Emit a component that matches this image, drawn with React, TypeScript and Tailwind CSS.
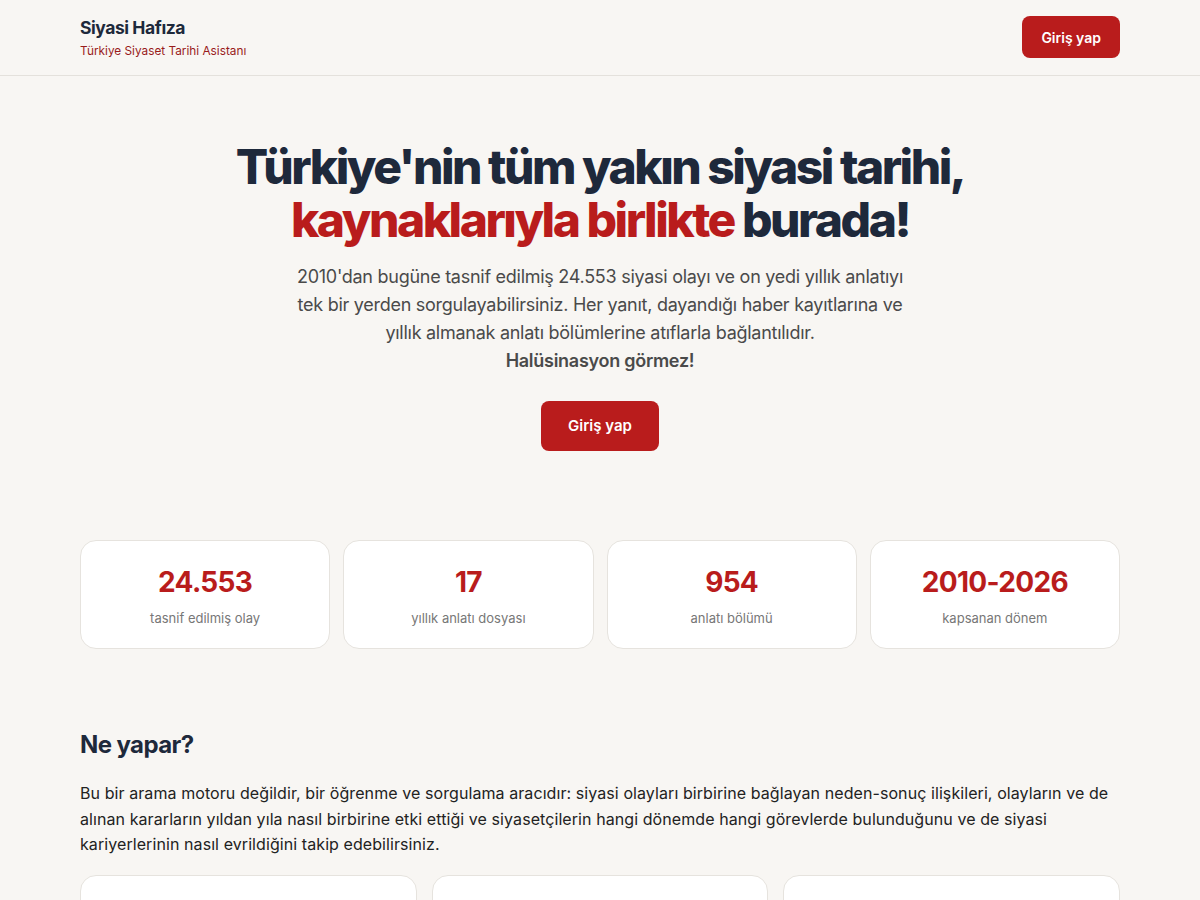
const stats = [
  { value: '24.553', label: 'tasnif edilmiş olay' },
  { value: '17', label: 'yıllık anlatı dosyası' },
  { value: '954', label: 'anlatı bölümü' },
  { value: '2010-2026', label: 'kapsanan dönem' },
];

export default function App() {
  return (
    <div className="min-h-screen bg-[#f8f6f3] text-[#1e293b]" style={{ fontFamily: 'Inter, "Noto Sans", sans-serif' }}>
      <header className="border-b border-[#e4e1dc]">
        <div className="mx-auto flex h-[75px] max-w-[1040px] items-center justify-between">
          <div>
            <p className="text-[17.5px] font-bold leading-6 tracking-tight text-[#1e293b]">Siyasi Hafıza</p>
            <p className="mt-[3px] text-[11.8px] leading-4 text-[#991b1b]">Türkiye Siyaset Tarihi Asistanı</p>
          </div>
          <button className="mb-[1px] h-[42px] rounded-lg bg-[#b91c1c] px-[19px] text-[14px] font-semibold text-white">Giriş yap</button>
        </div>
      </header>

      <main className="mx-auto max-w-[1040px]">
        <section className="flex flex-col items-center pt-[64px] text-center">
          <h1 className="text-[48px] font-extrabold leading-[53px] tracking-[-0.052em] text-[#1e293b]">
            Türkiye'nin tüm yakın siyasi tarihi,
            <br />
            <span className="text-[#b91c1c]">kaynaklarıyla birlikte</span> burada!
          </h1>
          <p className="mt-[17px] max-w-[630px] text-[18px] leading-[28px] tracking-[-0.015em] text-[#4a4a4a]">
            2010'dan bugüne tasnif edilmiş 24.553 siyasi olayı ve on yedi yıllık anlatıyı tek bir yerden sorgulayabilirsiniz. Her yanıt, dayandığı haber kayıtlarına ve yıllık almanak anlatı bölümlerine atıflarla bağlantılıdır.
            <br />
            <strong className="font-semibold">Halüsinasyon görmez!</strong>
          </p>
          <button className="mt-[26px] h-[50px] rounded-lg bg-[#b91c1c] px-[27px] text-[15px] font-semibold text-white">Giriş yap</button>
        </section>

        <section className="mt-[89px] grid grid-cols-4 gap-[13px]">
          {stats.map((s) => (
            <div key={s.label} className="flex h-[109px] flex-col items-center justify-center rounded-2xl border border-[#e6e3de] bg-white">
              <p className="mt-[2px] text-[28px] font-bold leading-9 tracking-tight text-[#b91c1c]">{s.value}</p>
              <p className="mt-[8px] text-[13px] leading-5 text-[#777]">{s.label}</p>
            </div>
          ))}
        </section>

        <section className="mt-[80px]">
          <h2 className="text-[24px] font-bold leading-8 tracking-tight text-[#1e293b]">Ne yapar?</h2>
          <p className="mt-[20px] text-[16px] leading-[25.5px] tracking-[0.005em] text-[#222]">
            Bu bir arama motoru değildir, bir öğrenme ve sorgulama aracıdır: siyasi olayları birbirine bağlayan neden-sonuç ilişkileri, olayların ve de alınan kararların yıldan yıla nasıl birbirine etki ettiği ve siyasetçilerin hangi dönemde hangi görevlerde bulunduğunu ve de siyasi kariyerlerinin nasıl evrildiğini takip edebilirsiniz.
          </p>
          <div className="mt-[17px] grid grid-cols-3 gap-[15px]">
            {[0, 1, 2].map((i) => (
              <div key={i} className="h-[120px] rounded-2xl border border-[#e6e3de] bg-white" />
            ))}
          </div>
        </section>
      </main>
    </div>
  );
}
